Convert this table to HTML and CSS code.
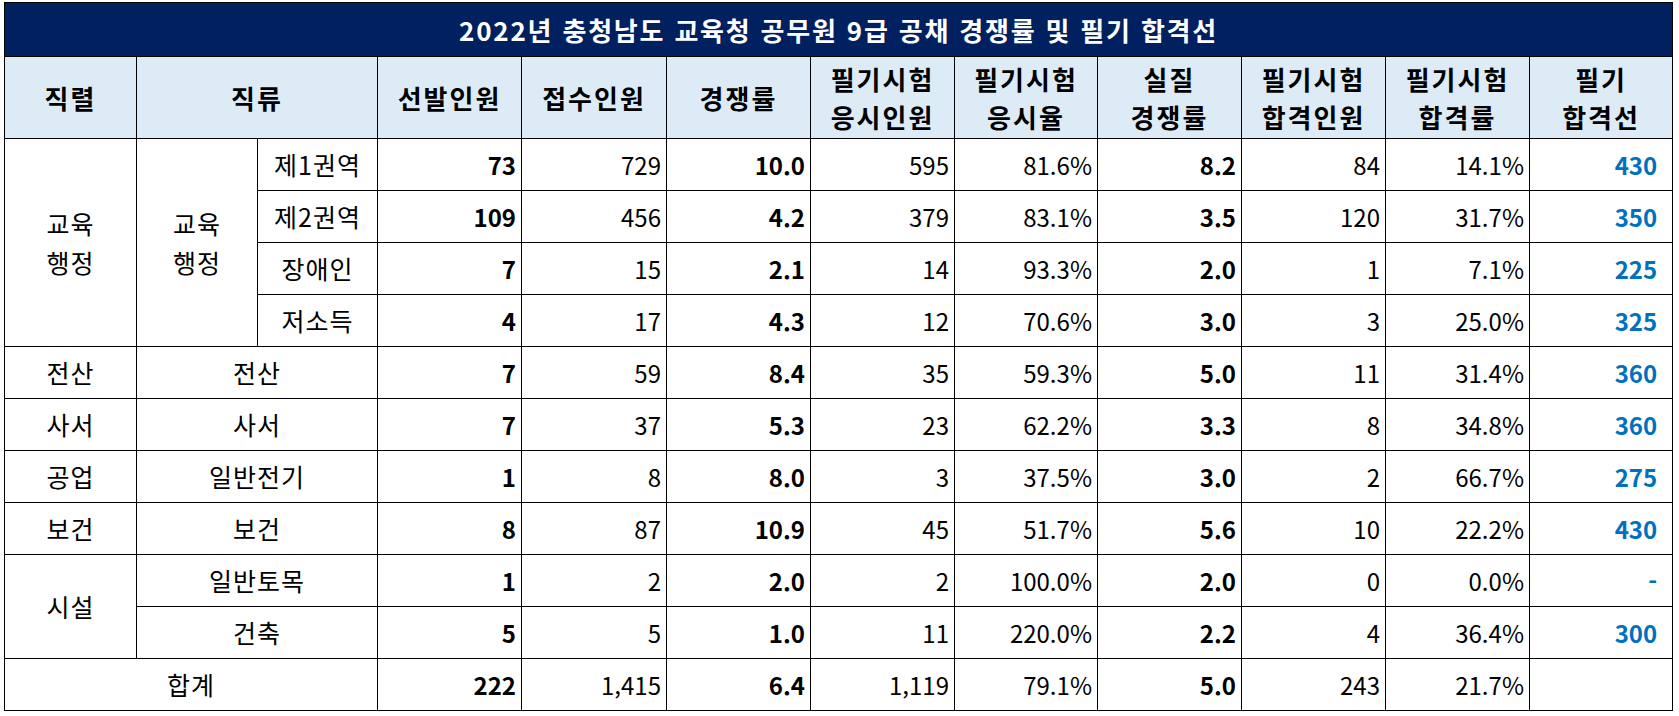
FILE: index.html
```html
<!DOCTYPE html>
<html lang="ko">
<head>
<meta charset="utf-8">
<title>2022년 충청남도 교육청 공무원 9급 공채 경쟁률 및 필기 합격선</title>
<link rel="stylesheet" href="styles.css">
</head>
<body>
<div class="wrap">
<table class="sheet">
  <colgroup>
    <col class="c-a"><col class="c-b"><col class="c-c">
    <col class="c-d"><col class="c-e"><col class="c-d"><col class="c-d"><col class="c-f">
    <col class="c-d"><col class="c-d"><col class="c-d"><col class="c-f">
  </colgroup>
  <thead>
    <tr class="title-row"><th colspan="12">2022년 충청남도 교육청 공무원 9급 공채 경쟁률 및 필기 합격선</th></tr>
    <tr class="head-row">
      <th>직렬</th>
      <th colspan="2">직류</th>
      <th>선발인원</th>
      <th>접수인원</th>
      <th>경쟁률</th>
      <th>필기시험<br>응시인원</th>
      <th>필기시험<br>응시율</th>
      <th>실질<br>경쟁률</th>
      <th>필기시험<br>합격인원</th>
      <th>필기시험<br>합격률</th>
      <th>필기<br>합격선</th>
    </tr>
  </thead>
  <tbody>
    <tr>
      <td class="lbl" rowspan="4">교육<br>행정</td>
      <td class="lbl" rowspan="4">교육<br>행정</td>
      <td class="lbl">제1권역</td>
      <td class="num b">73</td><td class="num">729</td><td class="num b">10.0</td><td class="num">595</td><td class="num">81.6%</td><td class="num b">8.2</td><td class="num">84</td><td class="num">14.1%</td><td class="num blue">430</td>
    </tr>
    <tr>
      <td class="lbl">제2권역</td>
      <td class="num b">109</td><td class="num">456</td><td class="num b">4.2</td><td class="num">379</td><td class="num">83.1%</td><td class="num b">3.5</td><td class="num">120</td><td class="num">31.7%</td><td class="num blue">350</td>
    </tr>
    <tr>
      <td class="lbl">장애인</td>
      <td class="num b">7</td><td class="num">15</td><td class="num b">2.1</td><td class="num">14</td><td class="num">93.3%</td><td class="num b">2.0</td><td class="num">1</td><td class="num">7.1%</td><td class="num blue">225</td>
    </tr>
    <tr>
      <td class="lbl">저소득</td>
      <td class="num b">4</td><td class="num">17</td><td class="num b">4.3</td><td class="num">12</td><td class="num">70.6%</td><td class="num b">3.0</td><td class="num">3</td><td class="num">25.0%</td><td class="num blue">325</td>
    </tr>
    <tr>
      <td class="lbl">전산</td>
      <td class="lbl" colspan="2">전산</td>
      <td class="num b">7</td><td class="num">59</td><td class="num b">8.4</td><td class="num">35</td><td class="num">59.3%</td><td class="num b">5.0</td><td class="num">11</td><td class="num">31.4%</td><td class="num blue">360</td>
    </tr>
    <tr>
      <td class="lbl">사서</td>
      <td class="lbl" colspan="2">사서</td>
      <td class="num b">7</td><td class="num">37</td><td class="num b">5.3</td><td class="num">23</td><td class="num">62.2%</td><td class="num b">3.3</td><td class="num">8</td><td class="num">34.8%</td><td class="num blue">360</td>
    </tr>
    <tr>
      <td class="lbl">공업</td>
      <td class="lbl" colspan="2">일반전기</td>
      <td class="num b">1</td><td class="num">8</td><td class="num b">8.0</td><td class="num">3</td><td class="num">37.5%</td><td class="num b">3.0</td><td class="num">2</td><td class="num">66.7%</td><td class="num blue">275</td>
    </tr>
    <tr>
      <td class="lbl">보건</td>
      <td class="lbl" colspan="2">보건</td>
      <td class="num b">8</td><td class="num">87</td><td class="num b">10.9</td><td class="num">45</td><td class="num">51.7%</td><td class="num b">5.6</td><td class="num">10</td><td class="num">22.2%</td><td class="num blue">430</td>
    </tr>
    <tr>
      <td class="lbl" rowspan="2">시설</td>
      <td class="lbl" colspan="2">일반토목</td>
      <td class="num b">1</td><td class="num">2</td><td class="num b">2.0</td><td class="num">2</td><td class="num">100.0%</td><td class="num b">2.0</td><td class="num">0</td><td class="num">0.0%</td><td class="num blue">-</td>
    </tr>
    <tr>
      <td class="lbl" colspan="2">건축</td>
      <td class="num b">5</td><td class="num">5</td><td class="num b">1.0</td><td class="num">11</td><td class="num">220.0%</td><td class="num b">2.2</td><td class="num">4</td><td class="num">36.4%</td><td class="num blue">300</td>
    </tr>
    <tr>
      <td class="lbl" colspan="3">합계</td>
      <td class="num b">222</td><td class="num">1,415</td><td class="num b">6.4</td><td class="num">1,119</td><td class="num">79.1%</td><td class="num b">5.0</td><td class="num">243</td><td class="num">21.7%</td><td class="num"></td>
    </tr>
  </tbody>
</table>
</div>
</body>
</html>
```
FILE: styles.css
```css
html, body {
  margin: 0;
  padding: 0;
  background: #ffffff;
}
.wrap {
  padding: 2px 7px 0 4px;
}
.sheet {
  border-collapse: collapse;
  table-layout: fixed;
  width: 1668px;
  font-family: "Noto Sans CJK KR", "Noto Sans", sans-serif;
  font-size: 24px;
  color: #000000;
}
.c-a { width: 132px; }
.c-b { width: 121px; }
.c-c { width: 120px; }
.c-d { width: 144px; }
.c-e { width: 145px; }
.c-f { width: 143px; }
.sheet th, .sheet td {
  border: 1px solid #000000;
  padding: 0 5px;
  box-sizing: border-box;
  white-space: nowrap;
  overflow: hidden;
}
.title-row th {
  height: 54px;
  background: #002060;
  color: #ffffff;
  font-size: 26px;
  letter-spacing: 1.8px;
  font-weight: 700;
  text-align: center;
  line-height: 1.2;
}
.head-row th {
  height: 82px;
  background: #ddebf7;
  font-size: 26px;
  letter-spacing: 2px;
  font-weight: 700;
  text-align: center;
  line-height: 38px;
}
.sheet tbody td {
  height: 52px;
  line-height: 39px;
}
.lbl {
  text-align: center;
  font-size: 25px;
  letter-spacing: 1px;
  font-weight: 400;
}
.num {
  text-align: right;
  font-weight: 400;
}
.num.b {
  font-weight: 700;
}
.num.blue {
  font-weight: 700;
  color: #0070c0;
  padding-right: 15px;
}
```
